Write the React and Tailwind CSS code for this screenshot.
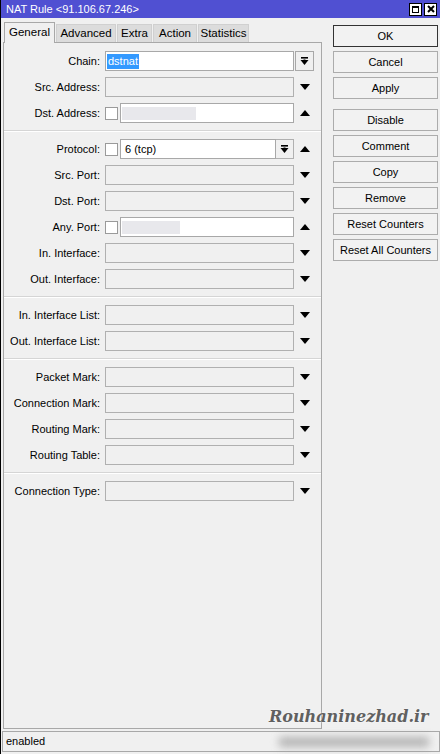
import React from "react";

const Down = () => (
  <svg width="10" height="6" viewBox="0 0 10 6"><polygon points="0,0 10,0 5,6" fill="#000" /></svg>
);
const Up = () => (
  <svg width="10" height="6" viewBox="0 0 10 6"><polygon points="0,6 10,6 5,0" fill="#000" /></svg>
);
const ComboIcon = () => (
  <svg width="9" height="9" viewBox="0 0 9 9">
    <rect x="1" y="0" width="7" height="1.6" fill="#000" />
    <polygon points="0.5,3 8.5,3 4.5,8" fill="#000" />
    <rect x="3.5" y="2.5" width="2" height="2" fill="#000" />
  </svg>
);

const Trailing = ({ kind }) => (
  <div className="w-[20px] ml-[1px] h-[20px] flex items-center justify-center">
    {kind === "down" && <Down />}
    {kind === "up" && <Up />}
  </div>
);

const Check = () => <div className="w-[13px] h-[13px] border border-[#9a9a9a] bg-white mr-[2px] shrink-0" />;

function Row({ label, kind, block, trailing }) {
  let field = null;
  if (kind === "gray") {
    field = <div className="w-[189px] h-[20px] border border-[#b0b0b0] bg-[#f0f0f0]" />;
  } else if (kind === "chain") {
    field = (
      <div className="flex items-center">
        <div className="w-[189px] h-[20px] border border-[#a8a8a8] bg-white flex items-center pl-[1px]">
          <span className="bg-[#3399ff] text-white px-[1px] leading-[15px]">dstnat</span>
        </div>
      </div>
    );
  } else if (kind === "check") {
    field = (
      <div className="flex items-center w-[189px]">
        <Check />
        <div className="flex-1 h-[20px] border border-[#a8a8a8] bg-white flex items-center pl-[1px]">
          <div className="h-[13px] bg-[#e8e8ec]" style={{ width: block }} />
        </div>
      </div>
    );
  } else if (kind === "protocol") {
    field = (
      <div className="flex items-center w-[189px]">
        <Check />
        <div className="w-[156px] h-[20px] border border-[#a8a8a8] bg-white flex items-center pl-[4px]">6 (tcp)</div>
        <div className="flex-1 h-[20px] border border-[#b0b0b0] border-l-0 bg-[#f0f0f0] flex items-center justify-center">
          <ComboIcon />
        </div>
      </div>
    );
  }
  return (
    <div className="flex items-center h-[26px]">
      <div className="w-[96px] text-right whitespace-nowrap">{label}:</div>
      <div className="ml-[5px]">{field}</div>
      {trailing === "button" ? (
        <div className="w-[19px] ml-[1px] h-[20px] border border-[#a8a8a8] bg-[#f0f0f0] flex items-center justify-center">
          <ComboIcon />
        </div>
      ) : (
        <Trailing kind={trailing} />
      )}
    </div>
  );
}

const Sep = () => (
  <div className="h-[10px] flex items-center">
    <div className="w-full border-t border-[#d5d5d5] border-b border-b-white" />
  </div>
);

const tabs = [
  ["General", "w-[51px]"],
  ["Advanced", "w-[60px]"],
  ["Extra", "w-[35px]"],
  ["Action", "w-[44px]"],
  ["Statistics", "w-[51px]"],
];

const buttons = ["OK", "Cancel", "Apply", "Disable", "Comment", "Copy", "Remove", "Reset Counters", "Reset All Counters"];

export default function App() {
  return (
    <div className="w-[440px] h-[754px] bg-[#f0f0f0] relative flex flex-col border-l border-black overflow-hidden text-[11px] text-black font-['Liberation_Sans',Arial,sans-serif]">
      <div className="h-[18px] bg-[#5050d2] text-white flex items-center justify-between pl-[5px] pr-[3px] shrink-0">
        <span className="text-[11px]">NAT Rule &lt;91.106.67.246&gt;</span>
        <div className="flex gap-[2px]">
          <div className="w-[13px] h-[13px] bg-white border border-black flex items-center justify-center">
            <div className="w-[7px] h-[7px] border border-black border-t-2" />
          </div>
          <div className="w-[13px] h-[13px] bg-white border border-black flex items-center justify-center">
            <svg width="8" height="8" viewBox="0 0 8 8"><path d="M1 1 L7 7 M7 1 L1 7" stroke="#000" strokeWidth="2" /></svg>
          </div>
        </div>
      </div>
      <div className="flex flex-1 min-h-0">
        <div className="w-[319px] ml-[2px] flex flex-col pt-[4px]">
          <div className="flex items-end h-[20px] pl-[1px]">
            {tabs.map(([t, w], i) => (
              <div
                key={t}
                className={
                  i === 0
                    ? `${w} h-[21px] -mb-px relative z-10 bg-[#f0f0f0] border border-[#a8a8a8] border-b-0 flex items-center justify-center text-[11.5px]`
                    : `${w} h-[18px] ml-[1px] bg-[#dcdcdc] border border-[#d0d0d0] border-b-0 flex items-center justify-center text-[11.5px]`
                }
              >
                {t}
              </div>
            ))}
          </div>
          <div className="flex-1 border border-[#a8a8a8] pt-[5px]">
            <Row label="Chain" kind="chain" trailing="button" />
            <Row label="Src. Address" kind="gray" trailing="down" />
            <Row label="Dst. Address" kind="check" block={74} trailing="up" />
            <Sep />
            <Row label="Protocol" kind="protocol" trailing="up" />
            <Row label="Src. Port" kind="gray" trailing="down" />
            <Row label="Dst. Port" kind="gray" trailing="down" />
            <Row label="Any. Port" kind="check" block={58} trailing="up" />
            <Row label="In. Interface" kind="gray" trailing="down" />
            <Row label="Out. Interface" kind="gray" trailing="down" />
            <Sep />
            <Row label="In. Interface List" kind="gray" trailing="down" />
            <Row label="Out. Interface List" kind="gray" trailing="down" />
            <Sep />
            <Row label="Packet Mark" kind="gray" trailing="down" />
            <Row label="Connection Mark" kind="gray" trailing="down" />
            <Row label="Routing Mark" kind="gray" trailing="down" />
            <Row label="Routing Table" kind="gray" trailing="down" />
            <Sep />
            <Row label="Connection Type" kind="gray" trailing="down" />
          </div>
        </div>
        <div className="ml-[11px] w-[105px] pt-[7px] flex flex-col">
          {buttons.map((b, i) => (
            <div
              key={b}
              className={`h-[22px] flex items-center justify-center bg-[#f2f2f2] border ${i === 0 ? "border-[#333]" : "border-[#acacac]"} ${i === 0 ? "" : i === 3 ? "mt-[10px]" : "mt-[4px]"} text-[11px]`}
            >
              {b}
            </div>
          ))}
        </div>
      </div>
      <div className="h-[21px] mt-[2px] mb-[2px] ml-[1px] border border-[#a8a8a8] flex items-center pl-[3px] shrink-0">enabled</div>
      <div className="absolute left-[278px] top-[737px] w-[150px] h-[10px] bg-[#9a9a9a] blur-[4px] opacity-70" />
      <div className="absolute left-[268px] top-[705px] text-[16px] font-bold italic text-[#606060] font-['DejaVu_Serif',serif] [text-shadow:0_0_2px_#fff]">
        Rouhaninezhad.ir
      </div>
    </div>
  );
}
